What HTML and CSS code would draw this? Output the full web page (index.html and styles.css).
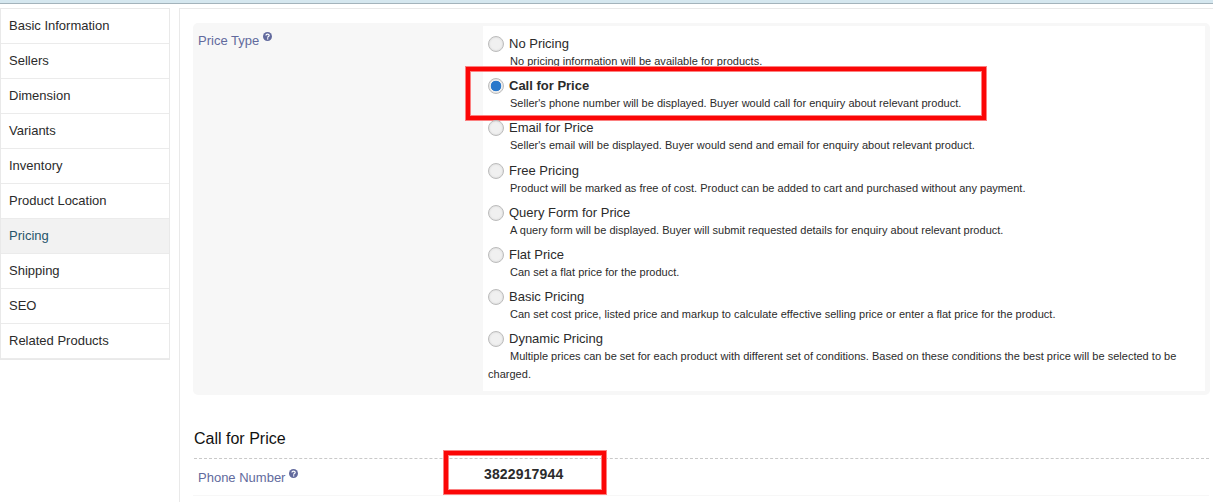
FILE: index.html
```html
<!DOCTYPE html>
<html lang="en">
<head>
<meta charset="utf-8">
<title>Product Pricing</title>
<link rel="stylesheet" href="styles.css">
</head>
<body>
<div class="topbar"></div>
<div class="layout">
  <nav class="sidebar">
    <a class="tab">Basic Information</a>
    <a class="tab">Sellers</a>
    <a class="tab">Dimension</a>
    <a class="tab">Variants</a>
    <a class="tab">Inventory</a>
    <a class="tab">Product Location</a>
    <a class="tab active">Pricing</a>
    <a class="tab">Shipping</a>
    <a class="tab">SEO</a>
    <a class="tab">Related Products</a>
  </nav>
  <main class="content">
    <section class="panel">
      <div class="label"><span>Price Type</span>
        <svg class="help" viewBox="0 0 16 16"><circle cx="8" cy="8" r="8"/><path d="M5.2 6.2C5.2 2.8 11 2.8 11 6.1C11 8 8.3 7.9 8.3 10M8.3 11.2V13.2"/></svg>
      </div>
      <div class="options">
        <div class="option"><label class="name"><i class="radio"></i><span>No Pricing</span></label><p class="desc">No pricing information will be available for products.</p></div>
        <div class="option"><label class="name picked"><i class="radio on"></i><span>Call for Price</span></label><p class="desc">Seller's phone number will be displayed. Buyer would call for enquiry about relevant product.</p><div class="mark mark-option"></div></div>
        <div class="option"><label class="name"><i class="radio"></i><span>Email for Price</span></label><p class="desc">Seller's email will be displayed. Buyer would send and email for enquiry about relevant product.</p></div>
        <div class="option"><label class="name"><i class="radio"></i><span>Free Pricing</span></label><p class="desc">Product will be marked as free of cost. Product can be added to cart and purchased without any payment.</p></div>
        <div class="option"><label class="name"><i class="radio"></i><span>Query Form for Price</span></label><p class="desc">A query form will be displayed. Buyer will submit requested details for enquiry about relevant product.</p></div>
        <div class="option"><label class="name"><i class="radio"></i><span>Flat Price</span></label><p class="desc">Can set a flat price for the product.</p></div>
        <div class="option"><label class="name"><i class="radio"></i><span>Basic Pricing</span></label><p class="desc">Can set cost price, listed price and markup to calculate effective selling price or enter a flat price for the product.</p></div>
        <div class="option"><label class="name"><i class="radio"></i><span>Dynamic Pricing</span></label><p class="desc wrap">Multiple prices can be set for each product with different set of conditions. Based on these conditions the best price will be selected to be charged.</p></div>
      </div>
    </section>
    <h2 class="heading">Call for Price</h2>
    <div class="field">
      <div class="label"><span>Phone Number</span>
        <svg class="help" viewBox="0 0 16 16"><circle cx="8" cy="8" r="8"/><path d="M5.2 6.2C5.2 2.8 11 2.8 11 6.1C11 8 8.3 7.9 8.3 10M8.3 11.2V13.2"/></svg>
      </div>
      <div class="value">3822917944<div class="mark mark-phone"></div></div>
    </div>
  </main>
</div>
</body>
</html>
```
FILE: styles.css
```css
* { box-sizing: border-box; }
body {
  margin: 0;
  height: 502px;
  overflow: hidden;
  background: #fff;
  color: #2b2b2b;
  font: 13px/18px "Liberation Sans", Arial, sans-serif;
}
.topbar { height: 4px; background: #d5e7ef; border-bottom: 1px solid #a3b3bb; }
.layout { display: flex; align-items: flex-start; gap: 9px; padding-top: 4px; }
.sidebar { width: 170px; border: 1px solid #e9e9e9; }
.tab {
  display: block;
  height: 35px;
  padding: 8px 8px 0;
  border-bottom: 1px solid #ebebeb;
}
.tab.active { background: #f2f2f2; color: #27556b; }
.content {
  flex: 1;
  height: 494px;
  padding: 14px 0 0 13px;
  border-left: 1px solid #e9e9e9;
  border-top: 1px solid #e9e9e9;
}
.panel {
  display: flex;
  width: 1017px;
  height: 372px;
  padding: 3px 5px 4px 0;
  border-radius: 5px;
  background: #f7f7f7;
}
.label {
  display: flex;
  gap: 4px;
  width: 290px;
  padding: 6px 0 0 5px;
  color: #626a9d;
}
.help { width: 9px; height: 9px; }
.help circle { fill: #626a9d; }
.help path { fill: none; stroke: #fff; stroke-width: 2.2; }
.options { flex: 1; padding: 9px 5px 0; background: #fff; }
.option { position: relative; height: 42px; }
.option:nth-child(3) { height: 43px; }
.name { display: flex; align-items: center; gap: 5px; height: 18px; }
.picked { font-weight: bold; }
.radio {
  width: 16px;
  height: 16px;
  border: 1px solid #bcbcbc;
  border-radius: 50%;
  background: #f0f0f0;
  box-shadow: inset 0 0 2px #ccc;
}
.radio.on { background: radial-gradient(circle, #2a78cb 0 5px, #f5f5f5 5.6px); }
.desc {
  margin: -1px 0 0;
  text-indent: 22px;
  font-size: 11px;
  line-height: 18px;
  letter-spacing: .018px;
  white-space: nowrap;
}
.desc.wrap { white-space: normal; }
.mark {
  position: absolute;
  border: 4px solid #fb0606;
  outline: 1px solid #fb8080;
  box-shadow: inset 0 0 0 1px #fb8080;
}
.mark-option { left: -22px; top: -10px; width: 520px; height: 53px; }
.heading {
  width: 1015px;
  height: 64px;
  margin: 0 0 0 1px;
  padding-top: 34px;
  border-bottom: 1px dashed #c9c9c9;
  color: #111;
  font-size: 16px;
  font-weight: normal;
  line-height: 20px;
}
.field { display: flex; width: 1016px; height: 37px; border-bottom: 1px solid #f7f7f7; }
.field .label { padding-top: 10px; }
.value { position: relative; padding: 6px 0 0 1px; font-size: 14px; font-weight: bold; letter-spacing: .15px; }
.mark-phone { left: -39px; top: -8px; width: 162px; height: 43px; }
```
